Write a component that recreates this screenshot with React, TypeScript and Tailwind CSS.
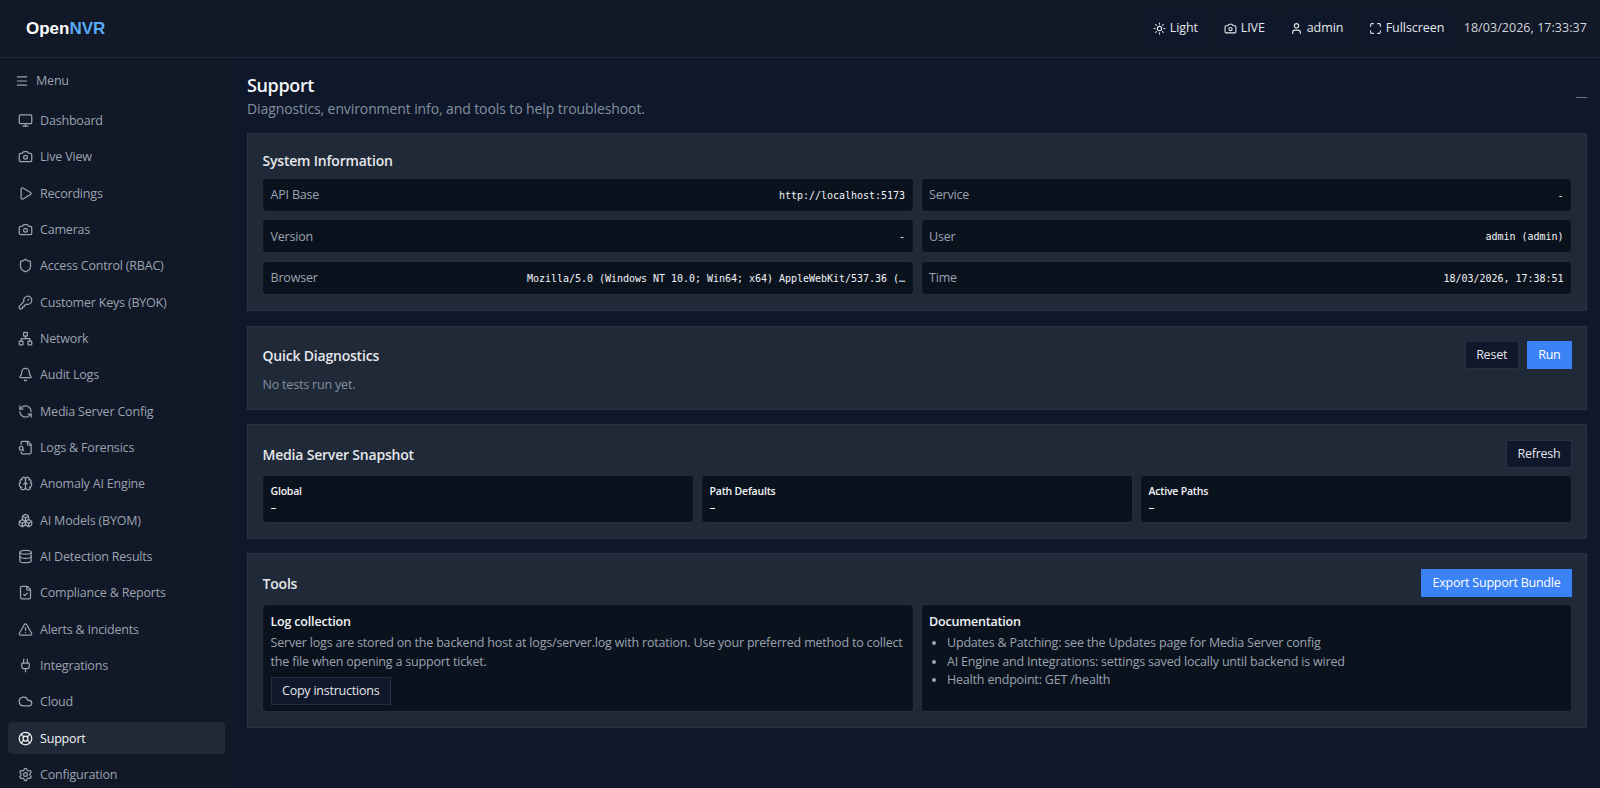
import type { ReactNode } from 'react'
import {
  Bell,
  Boxes,
  Brain,
  Camera,
  Cloud,
  Database,
  FileCheck,
  KeyRound,
  LifeBuoy,
  Maximize,
  Menu,
  Monitor,
  Network,
  Play,
  Plug,
  RefreshCcw,
  Settings,
  Shield,
  Sun,
  TriangleAlert,
  User,
  type LucideIcon,
} from 'lucide-react'

// File with a small magnifier on its left edge
function FileLogIcon({ className }: { className?: string }) {
  return (
    <svg viewBox="0 0 24 24" fill="none" stroke="currentColor" strokeWidth={2} strokeLinecap="round" strokeLinejoin="round" className={className}>
      <path d="M5 19v1a2 2 0 0 0 2 2h12a2 2 0 0 0 2-2V7l-5-5H7a2 2 0 0 0-2 2v3" />
      <path d="M15 2v4a2 2 0 0 0 2 2h4" />
      <circle cx="5" cy="13" r="3" />
      <path d="m9 17-1.8-1.8" />
    </svg>
  )
}

interface NavItem {
  label: string
  icon: LucideIcon | typeof FileLogIcon
}

const NAV_ITEMS: NavItem[] = [
  { label: 'Dashboard', icon: Monitor },
  { label: 'Live View', icon: Camera },
  { label: 'Recordings', icon: Play },
  { label: 'Cameras', icon: Camera },
  { label: 'Access Control (RBAC)', icon: Shield },
  { label: 'Customer Keys (BYOK)', icon: KeyRound },
  { label: 'Network', icon: Network },
  { label: 'Audit Logs', icon: Bell },
  { label: 'Media Server Config', icon: RefreshCcw },
  { label: 'Logs & Forensics', icon: FileLogIcon },
  { label: 'Anomaly AI Engine', icon: Brain },
  { label: 'AI Models (BYOM)', icon: Boxes },
  { label: 'AI Detection Results', icon: Database },
  { label: 'Compliance & Reports', icon: FileCheck },
  { label: 'Alerts & Incidents', icon: TriangleAlert },
  { label: 'Integrations', icon: Plug },
  { label: 'Cloud', icon: Cloud },
  { label: 'Support', icon: LifeBuoy },
  { label: 'Configuration', icon: Settings },
]

const SYSTEM_INFO = [
  { label: 'API Base', value: 'http://localhost:5173' },
  { label: 'Service', value: '-' },
  { label: 'Version', value: '-' },
  { label: 'User', value: 'admin (admin)' },
  { label: 'Browser', value: 'Mozilla/5.0 (Windows NT 10.0; Win64; x64) AppleWebKit/537.36 (…' },
  { label: 'Time', value: '18/03/2026, 17:38:51' },
]

function HeaderButton({ icon: Icon, children, className = '' }: { icon: LucideIcon; children: ReactNode; className?: string }) {
  return (
    <button className={`flex h-7 items-center gap-1 bg-[#0f172a] tracking-[-0.06px] text-[#e5e7eb] ${className}`}>
      <Icon className="h-[13px] w-[13px]" />
      {children}
    </button>
  )
}

function Header() {
  return (
    <header className="flex h-[58px] flex-shrink-0 items-center justify-between border-b border-[#1f2937] bg-[#111827] pl-[26px] pr-[13px]">
      <div className="pt-px font-['Liberation_Sans',Arial,sans-serif] text-[17px] font-bold text-white">
        Open<span className="text-[#5aa9f5]">NVR</span>
      </div>
      <div className="flex items-center">
        <HeaderButton icon={Sun} className="w-[62px] pl-[8px]">Light</HeaderButton>
        <HeaderButton icon={Camera} className="ml-[9px] w-[58px] pl-[8px]">LIVE</HeaderButton>
        <HeaderButton icon={User} className="ml-[9px] w-[69px] pl-[7px]">admin</HeaderButton>
        <HeaderButton icon={Maximize} className="ml-[9px] w-[92px] pl-[8px]">Fullscreen</HeaderButton>
        <span className="ml-[11px] tracking-[0.05px] text-[#d1d5db]">18/03/2026, 17:33:37</span>
      </div>
    </header>
  )
}

function Sidebar() {
  return (
    <aside className="w-[233px] flex-shrink-0 overflow-hidden bg-[#111827] px-2 tracking-[-0.19px] text-[#9ca3af]">
      <div className="flex h-[46.3px] items-center gap-[7px] pl-[7px]">
        <Menu className="h-[14px] w-[14px]" />
        <span>Menu</span>
      </div>
      <nav className="flex flex-col gap-1">
        {NAV_ITEMS.map(({ label, icon: Icon }) => (
          <div
            key={label}
            className={`flex h-[32.34px] w-[217px] items-center gap-[7px] rounded pl-[10px] ${label === 'Support' ? 'bg-[#1f2937] text-[#f3f4f6]' : ''}`}
          >
            <Icon className="h-[15px] w-[15px] flex-shrink-0" />
            <span className="pt-[1.8px]">{label}</span>
          </div>
        ))}
      </nav>
    </aside>
  )
}

function Card({ title, action, className = '', children }: { title: string; action?: ReactNode; className?: string; children: ReactNode }) {
  return (
    <section className={`border border-[#283443] bg-[#1f2937] px-[14px] ${className}`}>
      <div className="flex h-7 items-center justify-between">
        <h2 className="pl-[0.5px] pt-[2px] text-[14px] font-semibold tracking-[-0.2px] text-[#e5e7eb]">{title}</h2>
        <div className="flex gap-2">{action}</div>
      </div>
      {children}
    </section>
  )
}

function Button({ primary = false, children }: { primary?: boolean; children: ReactNode }) {
  return (
    <button
      className={`h-7 border px-[10.5px] tracking-[-0.23px] ${primary ? 'border-[#3b82f6] bg-[#3b82f6] text-white' : 'border-[#253041] bg-[#0f172a] text-[#e5e7eb]'}`}
    >
      {children}
    </button>
  )
}

function Panel({ className = '', children }: { className?: string; children: ReactNode }) {
  return <div className={`rounded border border-[#232e3d] bg-[#0a121e] px-[7.5px] ${className}`}>{children}</div>
}

export default function App() {
  return (
    <div className="flex h-[788px] w-[1600px] flex-col overflow-hidden bg-[#0f172a] font-['Open_Sans','Noto_Sans',sans-serif] text-[12.5px] leading-[18.4px]">
      <Header />
      <div className="flex min-h-0 flex-1">
        <Sidebar />
        <main className="min-w-0 flex-1 pl-[14px] pr-[13px] pt-[14px]">
          <div className="flex h-[61px] items-center justify-between">
            <div className="h-full">
              <h1 className="text-[18px] font-semibold leading-[26px] tracking-[-0.36px] text-[#f3f4f6]">Support</h1>
              <p className="text-[14px] leading-[21px] tracking-[-0.1px] text-[#8290a0]">Diagnostics, environment info, and tools to help troubleshoot.</p>
            </div>
            <span className="mb-[11px] h-px w-[11px] bg-[#6b7280]" />
          </div>

          <Card title="System Information" className="h-[178px] pt-[12.5px]">
            <div className="mt-[3.3px] grid grid-cols-2 gap-x-[7px] gap-y-[7.7px]">
              {SYSTEM_INFO.map(({ label, value }) => (
                <Panel key={label} className="flex h-[34px] items-center justify-between">
                  <span className="pt-px tracking-[-0.19px] text-[#9ca3af]">{label}</span>
                  <span className="pt-[2px] font-['DejaVu_Sans_Mono',monospace] text-[10px] tracking-[-0.02px] text-[#f3f4f6]">{value}</span>
                </Panel>
              ))}
            </div>
          </Card>

          <Card
            title="Quick Diagnostics"
            className="mt-[15px] h-[84px] pt-[14px]"
            action={
              <>
                <Button>Reset</Button>
                <Button primary>Run</Button>
              </>
            }
          >
            <p className="mt-[7px] pl-[0.5px] tracking-[-0.19px] text-[#8290a0]">No tests run yet.</p>
          </Card>

          <Card title="Media Server Snapshot" className="mt-[14px] h-[115px] pt-[15px]" action={<Button>Refresh</Button>}>
            <div className="mt-[6.5px] grid grid-cols-3 gap-[7px] text-[10.5px] leading-[17px] text-[#f3f4f6]">
              {['Global', 'Path Defaults', 'Active Paths'].map((name) => (
                <Panel key={name} className="h-[48px] pt-[7px]">
                  <div className="font-semibold tracking-[-0.2px]">{name}</div>
                  <div className="text-[12px] leading-[16px]">–</div>
                </Panel>
              ))}
            </div>
          </Card>

          <Card title="Tools" className="mt-[14px] h-[175px] pt-[15px]" action={<Button primary>Export Support Bundle</Button>}>
            <div className="mt-[7px] grid grid-cols-2 gap-[7px] tracking-[-0.19px] text-[#9ca3af]">
              <Panel className="h-[108px] pt-[8px]">
                <h3 className="font-semibold text-[#f3f4f6]">Log collection</h3>
                <p className="mb-[6px] mt-[3px]">
                  Server logs are stored on the backend host at logs/server.log with rotation. Use your preferred method to collect the file when opening a support ticket.
                </p>
                <Button>Copy instructions</Button>
              </Panel>
              <Panel className="h-[108px] pt-[8px]">
                <h3 className="font-semibold text-[#f3f4f6]">Documentation</h3>
                <ul className="mt-[3px] list-disc pl-[18px]">
                  <li>Updates &amp; Patching: see the Updates page for Media Server config</li>
                  <li>AI Engine and Integrations: settings saved locally until backend is wired</li>
                  <li>Health endpoint: GET /health</li>
                </ul>
              </Panel>
            </div>
          </Card>
        </main>
      </div>
    </div>
  )
}
